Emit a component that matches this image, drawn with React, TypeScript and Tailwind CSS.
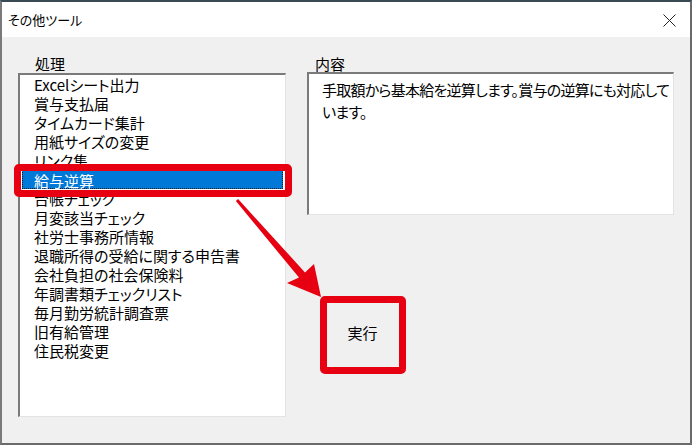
import React from "react";

const items = [
  "Excelシート出力",
  "賞与支払届",
  "タイムカード集計",
  "用紙サイズの変更",
  "リンク集",
  "給与逆算",
  "台帳チェック",
  "月変該当チェック",
  "社労士事務所情報",
  "退職所得の受給に関する申告書",
  "会社負担の社会保険料",
  "年調書類チェックリスト",
  "毎月勤労統計調査票",
  "旧有給管理",
  "住民税変更",
];

const font = "[font-family:'Noto_Sans_CJK_JP','Noto_Sans',sans-serif] [font-feature-settings:'palt']";

export default function App() {
  return (
    <div className={`relative w-[692px] h-[445px] overflow-hidden bg-[#f0f0f0] text-black ${font}`}>
      <div className="flex flex-col w-full h-full border-l-2 border-r-2 border-b-2 border-t-2 border-l-[#7a7a7a] border-r-[#6a6a6a] border-b-[#6a6a6a] border-t-[#3a4a55]">
        {/* title bar */}
        <div className="flex items-center justify-between h-[35px] bg-white pl-[6px] pr-[14px] shrink-0">
          <span className="text-[13px] leading-none">その他ツール</span>
          <svg width="13" height="13" viewBox="0 0 13 13" className="mt-[1px]">
            <path d="M0.5 0.5 L12.5 12.5 M12.5 0.5 L0.5 12.5" stroke="#222" strokeWidth="1" />
          </svg>
        </div>
        {/* body */}
        <div className="flex pl-[16px] pt-[18px]">
          {/* left column */}
          <div className="flex flex-col w-[268px]">
            <div className="pl-[17px] text-[15px] leading-[18px] h-[18px]">処理</div>
            <div className="h-[344px] bg-white border-t-2 border-l-2 border-t-[#7a7a7a] border-l-[#7a7a7a] border-b border-r border-b-[#e3e3e3] border-r-[#e3e3e3] px-[2px]">
              {items.map((it) => {
                const sel = it === "給与逆算";
                return (
                  <div
                    key={it}
                    className={
                      sel
                        ? "h-[19px] pl-[11px] text-[15px] leading-[19px] bg-[#0078d7] text-white border border-dotted border-[#1a1a1a] whitespace-nowrap"
                        : "h-[19px] pl-[12px] text-[15px] leading-[19px] whitespace-nowrap"
                    }
                  >
                    {it}
                  </div>
                );
              })}
            </div>
          </div>
          {/* right column */}
          <div className="flex flex-col ml-[21px] w-[367px]">
            <div className="pl-[8px] text-[15px] leading-[17px] h-[17px]">内容</div>
            <div className="h-[143px] bg-white border-t-2 border-l-2 border-t-[#7a7a7a] border-l-[#7a7a7a] border-b border-r border-b-[#e3e3e3] border-r-[#e3e3e3] pl-[13px] pr-[2px] pt-[5px] text-[15px] leading-[22px] tracking-[-0.75px] whitespace-nowrap">
              手取額から基本給を逆算します。賞与の逆算にも対応して
              <br />
              います。
            </div>
            <div className="mt-[87px] ml-[20px] w-[71px] h-[63px] flex items-center justify-center text-[15px] bg-[#f0f0f0]">
              実行
            </div>
          </div>
        </div>
      </div>

      {/* annotations */}
      <div className="absolute left-[14px] top-[164px] w-[278px] h-[33px] border-[7px] border-[#e60012] rounded-[5px] pointer-events-none" />
      <div className="absolute left-[320px] top-[296px] w-[86px] h-[78px] border-[7px] border-[#e60012] rounded-[5px] pointer-events-none" />
      <svg className="absolute left-0 top-0 pointer-events-none" width="692" height="445" viewBox="0 0 692 445">
        <polygon
          points="238.1,199 305,272.4 314,264 321,297 287,283 299,277.6 235.9,201"
          fill="#e60012"
        />
      </svg>
    </div>
  );
}
